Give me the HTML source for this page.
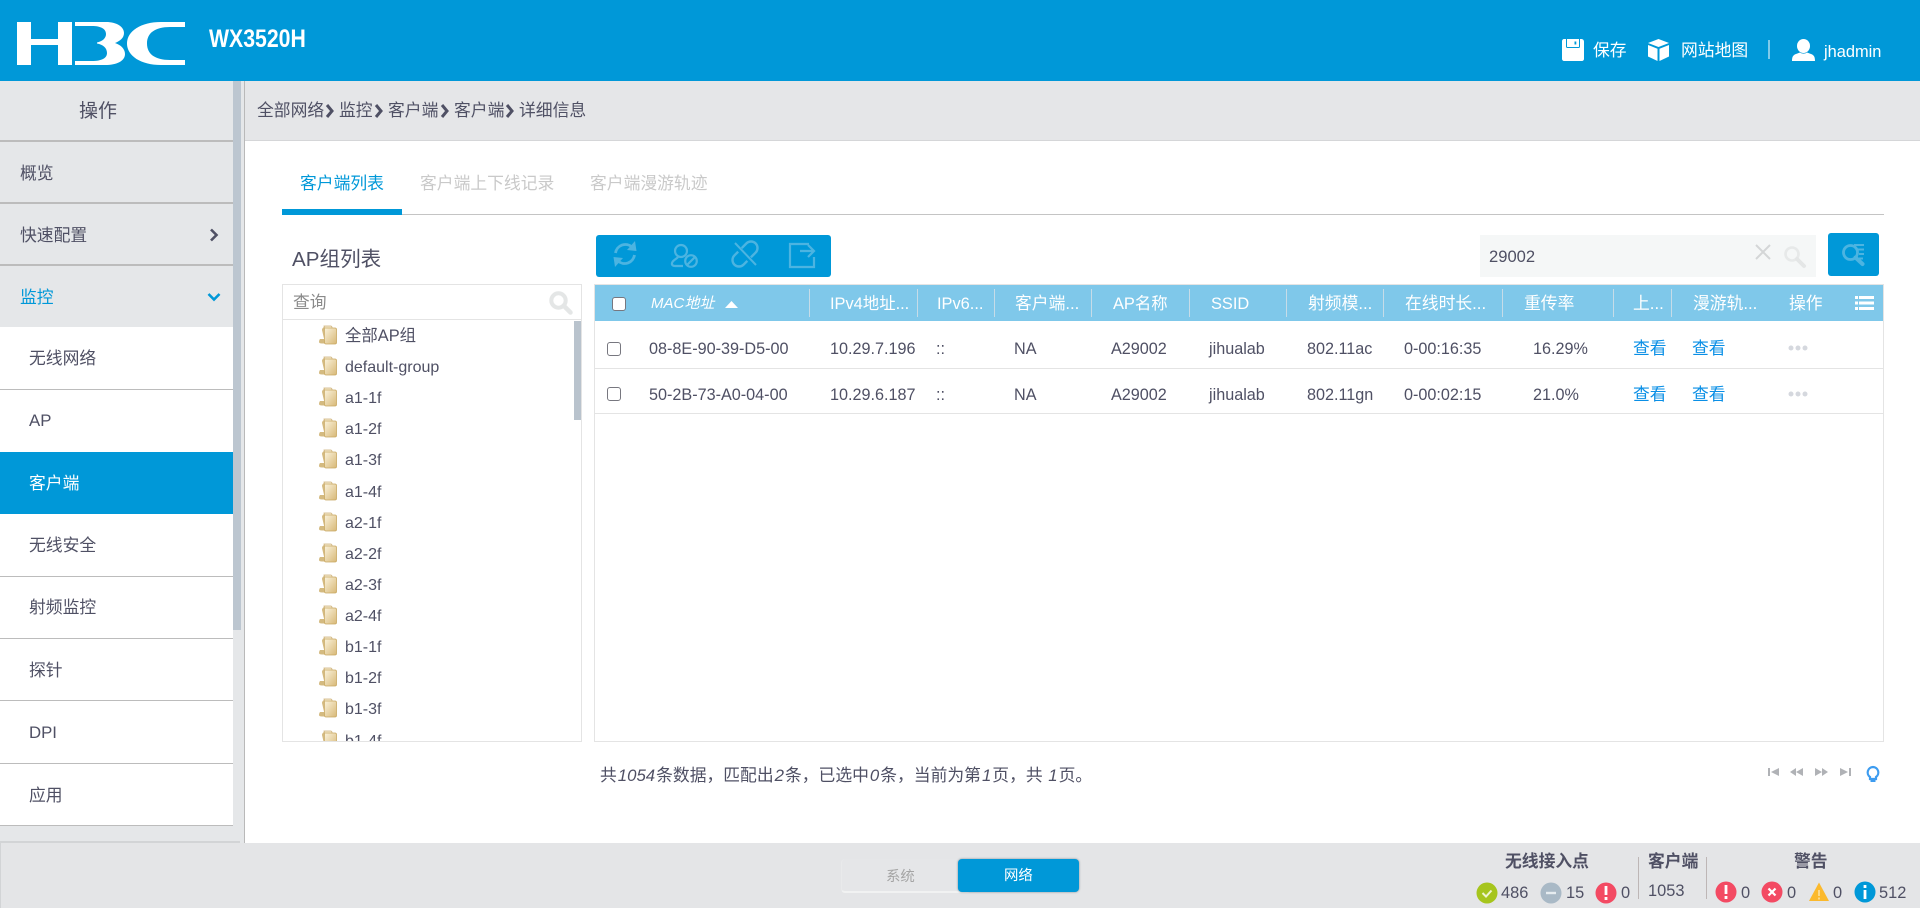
<!DOCTYPE html>
<html lang="zh"><head><meta charset="utf-8"><title>WX3520H</title>
<style>
*{box-sizing:border-box}
html,body{margin:0;padding:0;width:1920px;height:908px;overflow:hidden;background:#fff}
body{position:relative;font-family:"Liberation Sans","Noto Sans CJK SC",sans-serif;font-size:16.8px;color:#4f5064}
.a{position:absolute}
.t{position:absolute;white-space:nowrap;line-height:24px;height:24px;margin-top:1px}
.z{margin-top:0}
.l{position:absolute;background:#bcbcbc;height:1px;left:0;width:233px}
.w{color:#fff}
.b{color:#0098d8}
.v{position:absolute;top:289px;width:1px;height:28px;background:#c6dce8}
.h{color:#fff;font-size:16.4px}
.cb{position:absolute;width:14px;height:14px;border:1.5px solid #77777f;border-radius:3px;background:#fff}
.lk{color:#0a8fe6}
.tree{position:absolute;left:283px;top:320px;width:291px;height:421px;overflow:hidden}
.r{position:absolute;left:36px;height:31px;width:240px;white-space:nowrap;font-size:16px;line-height:31px}
.r svg{position:absolute;left:0;top:5px}
.r span{position:absolute;left:26px;top:1px}
svg{display:block;position:absolute;overflow:visible}
.s{font-size:16.2px}
i{font-style:italic;margin:0 1px}
</style></head><body>

<!-- header -->
<div class="a" style="left:0;top:0;width:1920px;height:81px;background:#0098d8"></div>
<svg style="left:0;top:0" width="200" height="81" fill="#fff">
<path d="M17 22h14v17h27V22h14v43H58V45H31v20H17z"/>
<path d="M75 22H106C117 22 124 27 124 33C124 38 120 41 115 43C121 45 125 49 125 54C125 61 117 65 105 65H75V61H92C102 61 107 58 107 53C107 48 103 44.500 97 43.500V42.500C103 41 106 38 106 34C106 29 101 26 92 26H75Z"/>
<path d="M185 22V27H170C155 27 147 33 147 43.500C147 54 155 60 170 60H185V65H161C141 65 127 56 127 43.500S141 22 161 22Z"/>
</svg>
<div class="t w" style="left:209px;top:26px;font-weight:bold;font-size:25px;transform:scaleX(.85);transform-origin:0 50%">WX3520H</div>

<svg style="left:1562px;top:39px" width="22" height="22"><path fill="#fff" d="M2 0h17c2 0 3 1 3 3v17c0 1-1 2-2 2H2c-1 0-2-1-2-2V2C0 1 1 0 2 0z"/><path fill="none" stroke="#0098d8" stroke-width="1" d="M4.500 0v7.500c0 .5 .5 1 1 1h11c.5 0 1-.5 1-1V0"/><rect x="12.500" y="2.500" width="1.800" height="3" fill="#0098d8"/></svg>
<div class="t w z" style="left:1593px;top:39px">保存</div>
<svg style="left:1648px;top:39px" width="22" height="22" fill="#fff"><path d="M10.500 0 21 4 10.500 8 0 4z"/><path d="M0 6l9.500 3.700V22L0 17.500z"/><path d="M21 6l-9.500 3.700V22l9.500-4.500z"/></svg>
<div class="t w z" style="left:1681px;top:39px">网站地图</div>
<div class="a" style="left:1768px;top:40px;width:2px;height:19px;background:#7fcaea"></div>
<svg style="left:1792px;top:39px" width="24" height="22" fill="#fff"><ellipse cx="11.500" cy="7" rx="6.500" ry="7"/><path d="M0 22c0-4 1-6 4-7l4-1.500c2 1.500 5 1.500 7 0l4 1.500c3 1 4 3 4 7z"/></svg>
<div class="t w" style="left:1824px;top:39px;font-size:16.4px">jhadmin</div>

<!-- sidebar -->
<div class="a" style="left:0;top:81px;width:245px;height:762px;background:#e5e7e9"></div>
<div class="a" style="left:0;top:327px;width:233px;height:498px;background:#fff"></div>
<div class="a" style="left:0;top:452px;width:233px;height:62px;background:#0098d8"></div>
<div class="a" style="left:233px;top:81px;width:8px;height:549px;background:#bcc6d0"></div>
<div class="a" style="left:244px;top:81px;width:1px;height:762px;background:#b9b9b9"></div>
<div class="l" style="top:140px;height:2px"></div>
<div class="l" style="top:202px;height:2px"></div>
<div class="l" style="top:264px;height:2px"></div>
<div class="l" style="top:389px"></div>
<div class="l" style="top:576px"></div>
<div class="l" style="top:638px"></div>
<div class="l" style="top:700px"></div>
<div class="l" style="top:763px"></div>
<div class="l" style="top:825px"></div>
<div class="t" style="left:79px;top:99px;font-size:19px;line-height:24px">操作</div>
<div class="t" style="left:20px;top:161px">概览</div>
<div class="t" style="left:20px;top:223px">快速配置</div>
<svg style="left:209px;top:228px" width="10" height="14"><path d="M2 1.500l5.500 5.500L2 12.500" fill="none" stroke="#4f5064" stroke-width="2.600"/></svg>
<div class="t b" style="left:20px;top:285px">监控</div>
<svg style="left:207px;top:292px" width="14" height="10"><path d="M1.500 2l5.500 5.500L12.500 2" fill="none" stroke="#0098d8" stroke-width="2.600"/></svg>
<div class="t" style="left:29px;top:346px">无线网络</div>
<div class="t" style="left:29px;top:408px">AP</div>
<div class="t w" style="left:29px;top:471px">客户端</div>
<div class="t" style="left:29px;top:533px">无线安全</div>
<div class="t" style="left:29px;top:595px">射频监控</div>
<div class="t" style="left:29px;top:658px">探针</div>
<div class="t" style="left:29px;top:720px">DPI</div>
<div class="t" style="left:29px;top:783px">应用</div>

<!-- breadcrumb -->
<div class="a" style="left:245px;top:81px;width:1675px;height:60px;background:#e5e6e8;border-bottom:1px solid #d5d6d8"></div>
<div class="t" style="left:257px;top:98px">全部网络</div>
<div class="t" style="left:339px;top:98px">监控</div>
<div class="t" style="left:388px;top:98px">客户端</div>
<div class="t" style="left:454px;top:98px">客户端</div>
<div class="t" style="left:519px;top:98px">详细信息</div>
<svg style="left:0;top:0" width="1" height="1"><g fill="none" stroke="#4f5064" stroke-width="3"><path d="M327 105l5 6-5 6M376 105l5 6-5 6M442 105l5 6-5 6M507 105l5 6-5 6"/></g></svg>

<!-- tabs -->
<div class="t b" style="left:300px;top:171px">客户端列表</div>
<div class="t" style="left:420px;top:171px;color:#c9c9c9">客户端上下线记录</div>
<div class="t" style="left:590px;top:171px;color:#c9c9c9">客户端漫游轨迹</div>
<div class="a" style="left:282px;top:214px;width:1602px;height:1px;background:#c4c4c4"></div>
<div class="a" style="left:282px;top:209px;width:120px;height:6px;background:#0098d8"></div>

<!-- AP group -->
<div class="t" style="left:292px;top:247px;font-size:20.600px">AP组列表</div>
<div class="a" style="left:282px;top:284px;width:300px;height:458px;border:1px solid #e4e4e4"></div>
<div class="a" style="left:283px;top:319px;width:298px;height:1px;background:#e4e4e4"></div>
<div class="t" style="left:293px;top:290px;color:#8a8a8a">查询</div>
<svg style="left:549px;top:291px" width="24" height="24"><circle cx="9.500" cy="9.500" r="7.200" fill="none" stroke="#e4e6e6" stroke-width="4"/><path d="M15 15l6.500 6.500" stroke="#e4e6e6" stroke-width="4.500" stroke-linecap="round"/></svg>
<div class="a" style="left:574px;top:321px;width:7px;height:99px;background:#b9c3cd"></div>

<svg width="0" height="0" style="left:0;top:0"><defs><linearGradient id="fg" x1="0" y1="0" x2="1" y2="1"><stop offset="0" stop-color="#fbf3dc"/><stop offset="1" stop-color="#d7b877"/></linearGradient>
<symbol id="fd" viewBox="0 0 18 20"><path d="M5 1h7l1 1v3H6z" fill="#f5ebd0" stroke="#cdb077" stroke-width=".8"/><path d="M3 5C3 3 5 2 5 2v12H1c0 0-1 1-1 3 0 1 1 1.500 3 1.500h3V18z" fill="#d4ba80"/><path d="M6 3h10c1 0 1.500 .5 1.500 1.500v13c0 1-.5 1.500-1.500 1.500H7c-1 0-1.500-.5-1.500-1.500V4C5.500 3.500 5.500 3 6 3z" fill="url(#fg)" stroke="#c9a862" stroke-width=".8"/></symbol></defs></svg>

<div class="tree">
<div class="r" style="top:0"><svg width="18" height="20"><use href="#fd"/></svg><span style="font-size:16.4px">全部AP组</span></div>
<div class="r" style="top:31px"><svg width="18" height="20"><use href="#fd"/></svg><span>default-group</span></div>
<div class="r" style="top:62px"><svg width="18" height="20"><use href="#fd"/></svg><span>a1-1f</span></div>
<div class="r" style="top:93px"><svg width="18" height="20"><use href="#fd"/></svg><span>a1-2f</span></div>
<div class="r" style="top:124px"><svg width="18" height="20"><use href="#fd"/></svg><span>a1-3f</span></div>
<div class="r" style="top:156px"><svg width="18" height="20"><use href="#fd"/></svg><span>a1-4f</span></div>
<div class="r" style="top:187px"><svg width="18" height="20"><use href="#fd"/></svg><span>a2-1f</span></div>
<div class="r" style="top:218px"><svg width="18" height="20"><use href="#fd"/></svg><span>a2-2f</span></div>
<div class="r" style="top:249px"><svg width="18" height="20"><use href="#fd"/></svg><span>a2-3f</span></div>
<div class="r" style="top:280px"><svg width="18" height="20"><use href="#fd"/></svg><span>a2-4f</span></div>
<div class="r" style="top:311px"><svg width="18" height="20"><use href="#fd"/></svg><span>b1-1f</span></div>
<div class="r" style="top:342px"><svg width="18" height="20"><use href="#fd"/></svg><span>b1-2f</span></div>
<div class="r" style="top:373px"><svg width="18" height="20"><use href="#fd"/></svg><span>b1-3f</span></div>
<div class="r" style="top:405px"><svg width="18" height="20"><use href="#fd"/></svg><span>b1-4f</span></div>
</div>

<!-- toolbar -->
<div class="a" style="left:596px;top:235px;width:235px;height:42px;background:#0098d8;border-radius:3px"></div>
<svg style="left:596px;top:235px" width="235" height="42" fill="none" stroke="#4cb4e1" stroke-width="2.800">
<path d="M19.500 18A10 10 0 0 1 36 12M38.500 20A10 10 0 0 1 22 26"/><path d="M39 6l1.500 10-9.500-1zM19 32l-1.500-10 9.500 1z" fill="#4cb4e1" stroke="none"/>
<circle cx="85" cy="16" r="6" stroke-width="2.200"/><path d="M82 22c-1 2-5 2.500-6 6-.5 2 1 3 3 3h8" stroke-width="2.200"/><circle cx="95" cy="26" r="5.800" stroke-width="2.200"/><path d="M91 30l8-8" stroke-width="2.200"/>
<rect x="134" y="12.500" width="30" height="13" rx="6.500" transform="rotate(-45 149 19)" stroke-width="2.400"/><path d="M138 9l21 21" stroke="#0098d8" stroke-width="5"/><path d="M139 8l21 22" stroke-width="2"/>
<path d="M213 9H194V32H218V22" stroke-width="2.200"/><path d="M204 16H218M212 10l6 6-6 6" stroke-width="2.200"/>
</svg>

<!-- search -->
<div class="a" style="left:1480px;top:235px;width:336px;height:42px;background:#f5f7f7"></div>
<div class="t" style="left:1489px;top:244px;font-size:16.6px">29002</div>
<svg style="left:1755px;top:244px" width="16" height="16"><path d="M1 1l14 14M15 1L1 15" stroke="#d4d6d7" stroke-width="2"/></svg>
<svg style="left:1783px;top:245px" width="24" height="24"><circle cx="9" cy="9" r="6.500" fill="none" stroke="#e7e9e9" stroke-width="2.600"/><path d="M14 14l7 7" stroke="#e4e6e6" stroke-width="4" stroke-linecap="round"/></svg>
<div class="a" style="left:1828px;top:233px;width:51px;height:43px;background:#0098d8;border-radius:3px"></div>
<svg style="left:1841px;top:243px" width="26" height="24" fill="none" stroke="#4cb4e1"><circle cx="9.500" cy="9.500" r="7" stroke-width="2.800"/><path d="M14.500 14.500l7 6.500" stroke-width="4" stroke-linecap="round"/><path d="M13 2h10M17 6.500h6M18 11h5M18 15.500h4" stroke-width="2"/></svg>

<!-- table -->
<div class="a" style="left:594px;top:284px;width:1290px;height:458px;border:1px solid #e4e4e4;border-top-width:1px"></div>
<div class="a" style="left:595px;top:285px;width:1288px;height:36px;background:#7fc8ea"></div>
<div class="v" style="left:809px"></div><div class="v" style="left:917px"></div><div class="v" style="left:994px"></div><div class="v" style="left:1091px"></div><div class="v" style="left:1189px"></div><div class="v" style="left:1286px"></div><div class="v" style="left:1383px"></div><div class="v" style="left:1502px"></div><div class="v" style="left:1613px"></div><div class="v" style="left:1671px"></div>
<div class="cb" style="left:612px;top:297px"></div>
<div class="t h" style="left:651px;top:291px;font-style:italic;font-size:15px">MAC地址</div>
<svg style="left:725px;top:301px" width="13" height="8"><path d="M6.500 0L13 7H0z" fill="#fff"/></svg>
<div class="t h" style="left:830px;top:291px">IPv4地址...</div>
<div class="t h" style="left:937px;top:291px">IPv6...</div>
<div class="t h" style="left:1015px;top:291px;font-size:16.8px">客户端...</div>
<div class="t h" style="left:1113px;top:291px">AP名称</div>
<div class="t h" style="left:1211px;top:291px">SSID</div>
<div class="t h" style="left:1308px;top:291px;font-size:16.8px">射频模...</div>
<div class="t h" style="left:1405px;top:291px;font-size:16.8px">在线时长...</div>
<div class="t h" style="left:1524px;top:291px;font-size:16.8px">重传率</div>
<div class="t h" style="left:1633px;top:291px;font-size:16.8px">上...</div>
<div class="t h" style="left:1693px;top:291px;font-size:16.8px">漫游轨...</div>
<div class="t h" style="left:1789px;top:291px;font-size:16.8px">操作</div>
<svg style="left:1855px;top:296px" width="19" height="14" fill="#fff"><path d="M0 0h3v3H0zM4 0h15v3H4zM0 5.500h3v3H0zM4 5.500h15v3H4zM0 11h3v3H0zM4 11h15v3H4z"/></svg>

<div class="a" style="left:595px;top:368px;width:1288px;height:1px;background:#e4e4e4"></div>
<div class="a" style="left:595px;top:413px;width:1288px;height:1px;background:#e4e4e4"></div>

<div class="cb" style="left:607px;top:342px"></div>
<div class="t s" style="left:649px;top:336px">08-8E-90-39-D5-00</div>
<div class="t s" style="left:830px;top:336px">10.29.7.196</div>
<div class="t s" style="left:936px;top:336px">::</div>
<div class="t s" style="left:1014px;top:336px">NA</div>
<div class="t s" style="left:1111px;top:336px">A29002</div>
<div class="t s" style="left:1209px;top:336px">jihualab</div>
<div class="t s" style="left:1307px;top:336px">802.11ac</div>
<div class="t s" style="left:1404px;top:336px">0-00:16:35</div>
<div class="t s" style="left:1533px;top:336px">16.29%</div>
<div class="t lk" style="left:1633px;top:336px">查看</div>
<div class="t lk" style="left:1692px;top:336px">查看</div>
<svg style="left:1788px;top:345px" width="20" height="7" fill="#d5d8de"><circle cx="3" cy="3" r="2.500"/><circle cx="10" cy="3" r="2.500"/><circle cx="17" cy="3" r="2.500"/></svg>

<div class="cb" style="left:607px;top:387px"></div>
<div class="t s" style="left:649px;top:382px">50-2B-73-A0-04-00</div>
<div class="t s" style="left:830px;top:382px">10.29.6.187</div>
<div class="t s" style="left:936px;top:382px">::</div>
<div class="t s" style="left:1014px;top:382px">NA</div>
<div class="t s" style="left:1111px;top:382px">A29002</div>
<div class="t s" style="left:1209px;top:382px">jihualab</div>
<div class="t s" style="left:1307px;top:382px">802.11gn</div>
<div class="t s" style="left:1404px;top:382px">0-00:02:15</div>
<div class="t s" style="left:1533px;top:382px">21.0%</div>
<div class="t lk" style="left:1633px;top:382px">查看</div>
<div class="t lk" style="left:1692px;top:382px">查看</div>
<svg style="left:1788px;top:391px" width="20" height="7" fill="#d5d8de"><circle cx="3" cy="3" r="2.500"/><circle cx="10" cy="3" r="2.500"/><circle cx="17" cy="3" r="2.500"/></svg>

<!-- paging -->
<div class="t" style="left:600px;top:763px">共<i>1054</i>条数据，匹配出<i>2</i>条，已选中<i>0</i>条，当前为第<i>1</i>页，共 <i>1</i>页。</div>
<svg style="left:1768px;top:768px" width="86" height="8" fill="#b0b2b6">
<path d="M0 0h2v8H0zM3 4l8-4v8z"/><path d="M22 4l6-4v8zM28 4l7-4v8z"/><path d="M47 0l7 4-7 4zM54 0l6 4-6 4z"/><path d="M72 0l8 4-8 4zM81 0h2v8h-2z"/></svg>
<svg style="left:1866px;top:766px" width="14" height="18"><path d="M7 1a5.500 5.500 0 0 1 3 10v2H4v-2a5.500 5.500 0 0 1 3-10z" fill="none" stroke="#3d9cf0" stroke-width="2.200"/><path d="M4.500 14h5v2h-5z" fill="#3d9cf0"/></svg>

<!-- bottom bar -->
<div class="a" style="left:0;top:841px;width:240px;height:2px;background:#d2d4d6"></div>
<div class="a" style="left:0;top:843px;width:1920px;height:65px;background:#e4e5e7"></div>
<div class="a" style="left:0;top:841px;width:1px;height:67px;background:#d2d4d6"></div>
<div class="a" style="left:841px;top:859px;width:130px;height:34px;background:#e5e6e8;border-radius:4px;border-bottom:2px solid #f1f2f2;border-left:1px solid #e9eaeb"></div>
<div class="t z" style="left:886px;top:865px;font-size:14.4px;color:#a5a5a5">系统</div>
<div class="a" style="left:958px;top:859px;width:121px;height:33px;background:#0098d8;border-radius:4px;box-shadow:0 0 2px #7d8a92"></div>
<div class="t w z" style="left:1004px;top:864px;font-size:14.4px">网络</div>

<div class="t z" style="left:1505px;top:850px;font-weight:bold">无线接入点</div>
<div class="t z" style="left:1648px;top:850px;font-weight:bold">客户端</div>
<div class="t z" style="left:1794px;top:850px;font-weight:bold">警告</div>
<div class="a" style="left:1638px;top:857px;width:1px;height:42px;background:#bdb6b6"></div>
<div class="a" style="left:1706px;top:857px;width:1px;height:42px;background:#bdb6b6"></div>

<svg style="left:0;top:0" width="1" height="1">
<circle cx="1487" cy="893" r="10.500" fill="#a6c51d"/><path d="M1482.500 893l3.500 3.500 5.500-6" fill="none" stroke="#eef4d0" stroke-width="2"/>
<circle cx="1551" cy="893" r="10.500" fill="#a9b9c6"/><path d="M1546 893h10" stroke="#e6ecf0" stroke-width="2.400"/>
<circle cx="1606" cy="893" r="10.500" fill="#f34a63"/><path d="M1606 886v9M1606 897v3" stroke="#fff" stroke-width="2.800"/>
<circle cx="1726" cy="892" r="10.500" fill="#f34a63"/><path d="M1726 885v9M1726 896v3" stroke="#fff" stroke-width="2.800"/>
<circle cx="1772" cy="892" r="10.500" fill="#f34a63"/><path d="M1768.500 888.500l7 7M1775.500 888.500l-7 7" stroke="#fff" stroke-width="2.200"/>
<path d="M1819 882.500l10 18.500h-20z" fill="#fbb92d"/><path d="M1819 890v6M1819 897.500v2" stroke="#fcdd94" stroke-width="1.800"/>
<circle cx="1865" cy="892" r="10.500" fill="#0098d8"/><path d="M1865 890v9M1865 885v3" stroke="#fff" stroke-width="2.800"/>
</svg>
<div class="t z" style="left:1501px;top:881px;font-size:16.4px">486</div>
<div class="t z" style="left:1566px;top:881px;font-size:16.4px">15</div>
<div class="t z" style="left:1621px;top:881px;font-size:16.4px">0</div>
<div class="t z" style="left:1648px;top:879px;font-size:16.4px">1053</div>
<div class="t z" style="left:1741px;top:881px;font-size:16.4px">0</div>
<div class="t z" style="left:1787px;top:881px;font-size:16.4px">0</div>
<div class="t z" style="left:1833px;top:881px;font-size:16.4px">0</div>
<div class="t z" style="left:1879px;top:881px;font-size:16.4px">512</div>

</body></html>
